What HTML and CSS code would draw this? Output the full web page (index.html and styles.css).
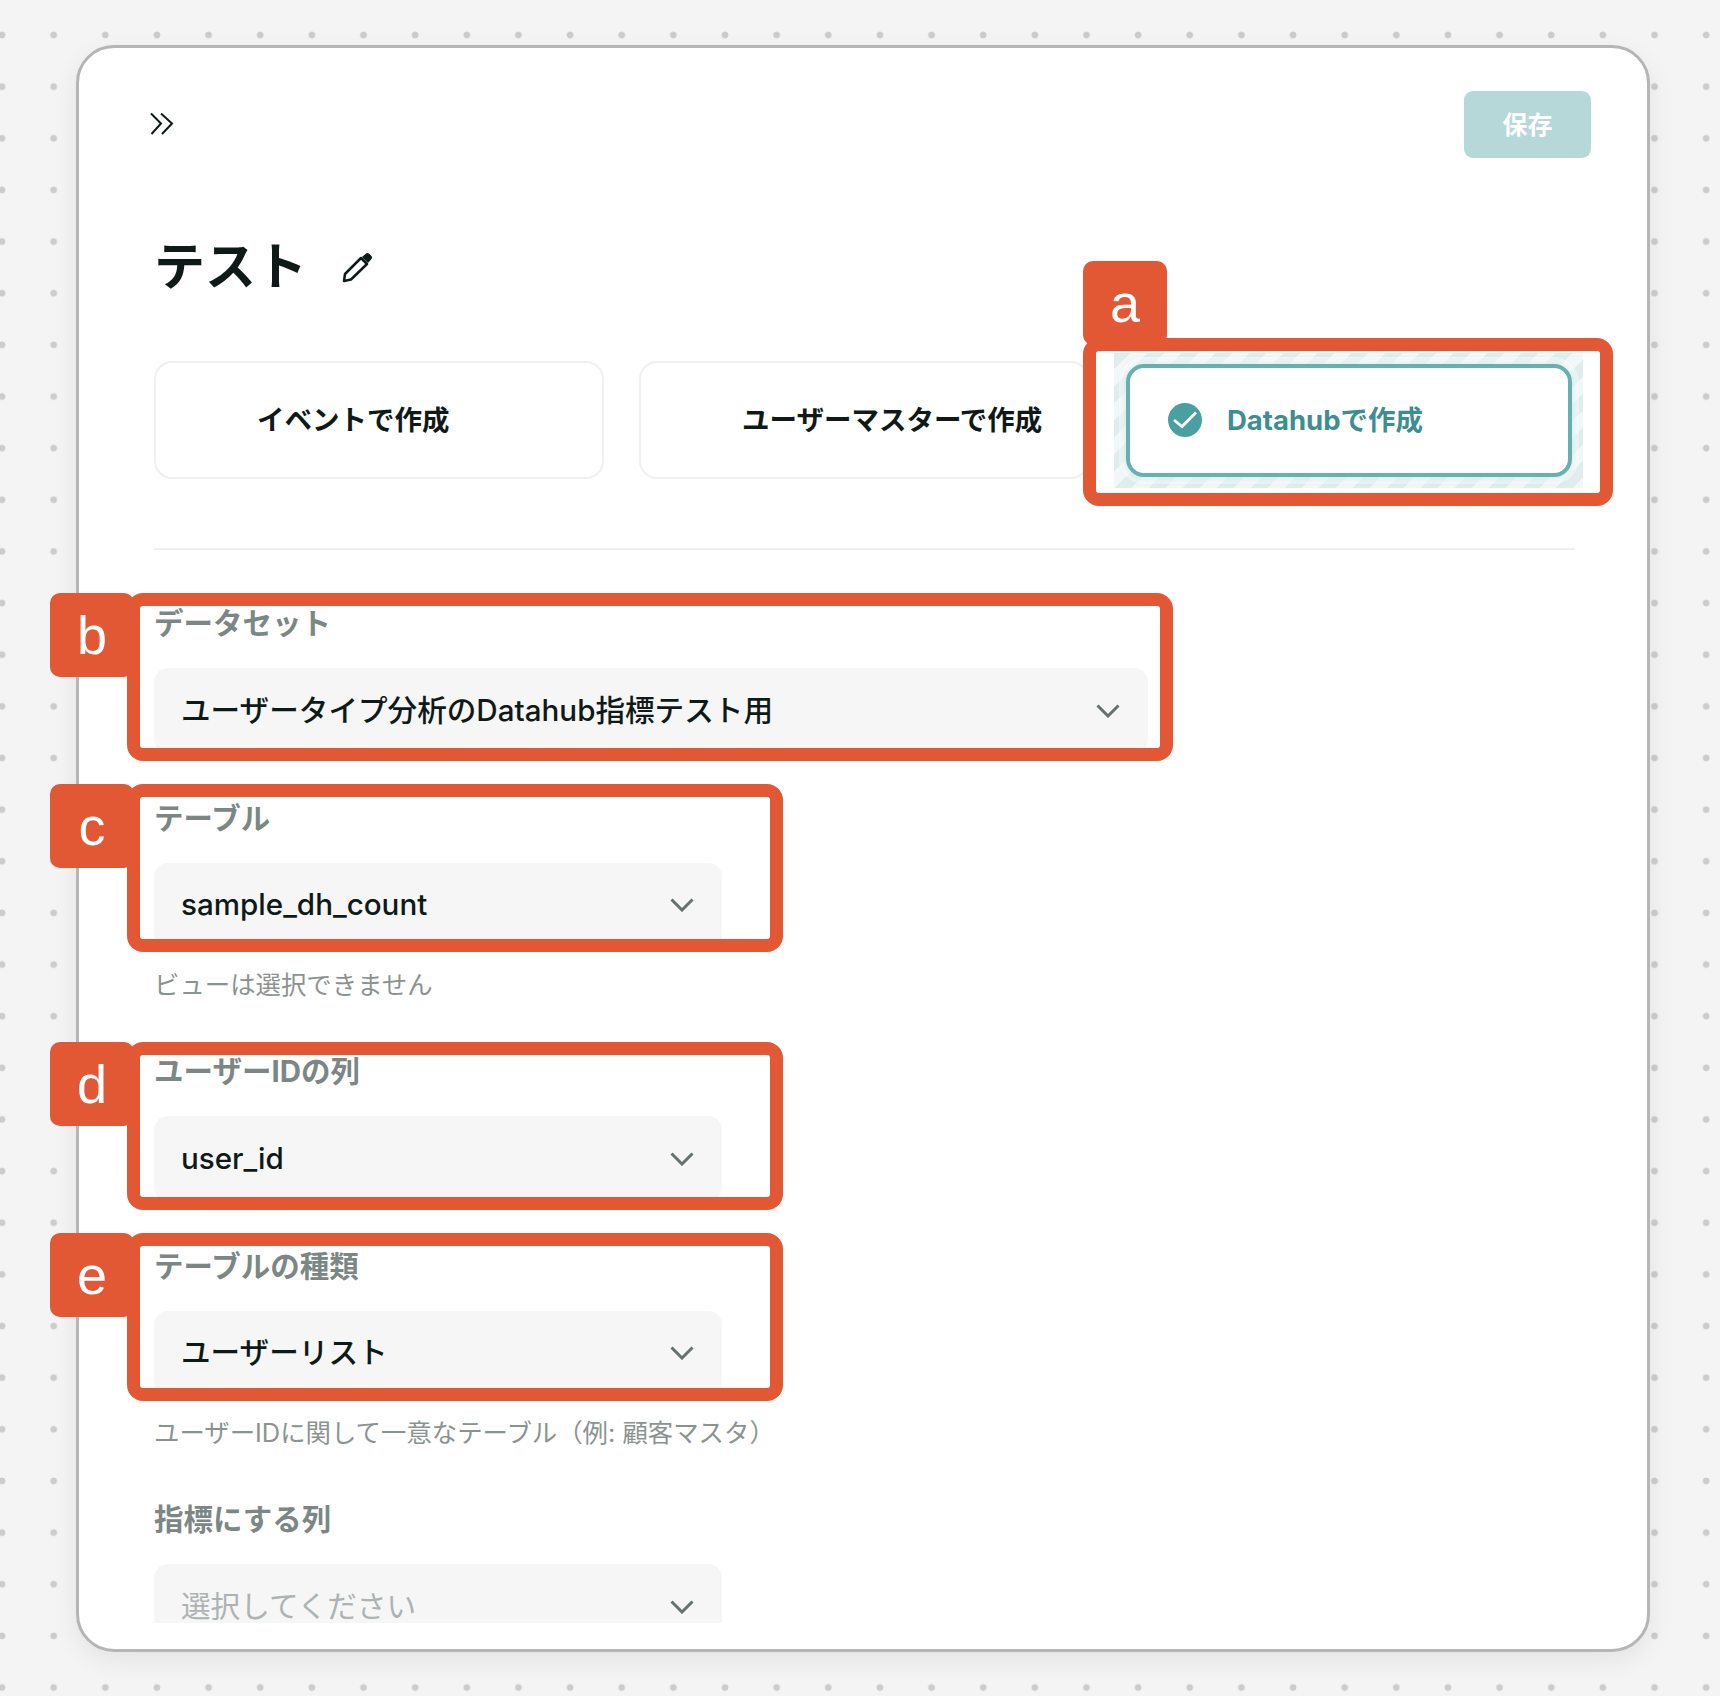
FILE: index.html
```html
<!DOCTYPE html>
<html lang="ja">
<head>
  <meta charset="UTF-8" />
  <title>テスト</title>
  <link rel="stylesheet" href="styles.css">
</head>
<body>
  <div class="page">
    <div class="panel">
      <div class="panel-body">
        <div class="topbar">
          <svg class="expand-icon" width="24" height="24" viewBox="0 0 24 24">
            <path d="M1 1.500 L11 11.500 L1.500 22 M11 1.500 L22 11.500 L12 22" fill="none" stroke="#0f1a18" stroke-width="2"/>
          </svg>
          <button class="save-btn">保存</button>
        </div>

        <div class="title-row">
          <h1>テスト</h1>
          <svg width="31" height="31" viewBox="0 0 31 31">
            <path d="M2 29 L3 22 L19 6 L25 12 L9 27.500 Z" fill="none" stroke="#0f1a18" stroke-width="2.500" stroke-linejoin="round"/>
            <path d="M20 5 L24 1.500 Q25.500 0.500 27 1.500 L29.500 4 Q30.500 5.500 29.500 7 L26 11 Z" fill="#0f1a18"/>
          </svg>
        </div>

        <div class="cards">
          <div class="card">イベントで作成</div>
          <div class="card">ユーザーマスターで作成</div>
          <div class="card card-selected">
            <svg width="34" height="34" viewBox="0 0 34 34">
              <circle cx="17" cy="17" r="17" fill="#4a9fa0"/>
              <path d="M6 17 L14 23.500 L28 9.500" fill="none" stroke="#fff" stroke-width="2.800"/>
            </svg>
            <span>Datahubで作成</span>
          </div>
        </div>

        <div class="divider"></div>

        <div class="field">
          <label>データセット</label>
          <div class="select select-wide">
            <span>ユーザータイプ分析のDatahub指標テスト用</span>
            <svg class="chevron" width="24" height="14" viewBox="0 0 24 14"><path d="M1.500 1.500 L12 12 L22.500 1.500"/></svg>
          </div>
        </div>

        <div class="field field-help">
          <label>テーブル</label>
          <div class="select">
            <span>sample_dh_count</span>
            <svg class="chevron" width="24" height="14" viewBox="0 0 24 14"><path d="M1.500 1.500 L12 12 L22.500 1.500"/></svg>
          </div>
          <p class="help">ビューは選択できません</p>
        </div>

        <div class="field">
          <label>ユーザーIDの列</label>
          <div class="select">
            <span>user_id</span>
            <svg class="chevron" width="24" height="14" viewBox="0 0 24 14"><path d="M1.500 1.500 L12 12 L22.500 1.500"/></svg>
          </div>
        </div>

        <div class="field field-help">
          <label>テーブルの種類</label>
          <div class="select">
            <span>ユーザーリスト</span>
            <svg class="chevron" width="24" height="14" viewBox="0 0 24 14"><path d="M1.500 1.500 L12 12 L22.500 1.500"/></svg>
          </div>
          <p class="help">ユーザーIDに関して一意なテーブル（例: 顧客マスタ）</p>
        </div>

        <div class="field">
          <label>指標にする列</label>
          <div class="select placeholder">
            <span>選択してください</span>
            <svg class="chevron" width="24" height="14" viewBox="0 0 24 14"><path d="M1.500 1.500 L12 12 L22.500 1.500"/></svg>
          </div>
        </div>
      </div>
    </div>

    <!-- callouts drawn over the screenshot -->
    <div class="note note-a"><div class="tag tag-top">a</div></div>
    <div class="note note-b"><div class="tag">b</div></div>
    <div class="note note-c"><div class="tag">c</div></div>
    <div class="note note-d"><div class="tag">d</div></div>
    <div class="note note-e"><div class="tag">e</div></div>
  </div>
</body>
</html>
```

FILE: styles.css
```css
* {
  box-sizing: border-box;
}
body {
  margin: 0;
  font-family: Inter, "Noto Sans CJK JP", sans-serif;
  line-height: 1.2;
  color: #0f1a18;
  background-color: #f4f4f4;
  background-image: radial-gradient(circle, #cccccc 3px, transparent 3.8px);
  background-size: 51.65px 51.65px;
  background-position: -23.8px 9.2px;
}
.page {
  position: relative;
  width: 1720px;
  height: 1696px;
  padding: 45px 0 0 76px;
  overflow: hidden;
}
.panel {
  width: 1574px;
  height: 1607px;
  background-color: #ffffff;
  border: 3px solid #b5b5b5;
  border-radius: 38px;
  box-shadow: 0 8px 26px rgba(0, 0, 0, 0.07);
}
.panel-body {
  position: relative;
  z-index: 0;
  height: 1575px;
  padding: 43px 72px 0 75px;
  overflow: hidden;
}
.topbar {
  display: flex;
  justify-content: space-between;
  align-items: center;
  margin: 0 -16px 0 -4px;
}
.expand-icon {
  margin-top: -1px;
}
.save-btn {
  width: 127px;
  height: 67px;
  padding: 0 0 4px;
  border: none;
  border-radius: 9px;
  background-color: #b7d8d9;
  color: #ffffff;
  font-family: inherit;
  font-size: 25px;
  font-weight: 700;
}
.title-row {
  display: flex;
  align-items: center;
  gap: 35px;
  margin-top: 79px;
}
h1 {
  margin: 0;
  font-size: 51px;
  line-height: 60px;
  font-weight: 700;
}
.cards {
  display: flex;
  align-items: center;
  gap: 35px;
  height: 116px;
  margin-top: 65px;
}
.card {
  display: flex;
  align-items: center;
  flex-shrink: 0;
  width: 450px;
  height: 118px;
  padding-left: 101px;
  border: 2px solid #f0f0f0;
  border-radius: 18px;
  background-color: #ffffff;
  font-size: 27.500px;
  font-weight: 700;
}
.card-selected {
  position: relative;
  width: 446px;
  height: 113px;
  margin-left: 2px;
  padding-left: 38px;
  gap: 25px;
  border: 4px solid #66b0b2;
  color: #3d8e90;
  box-shadow: 0 0 0 7px rgba(255, 255, 255, 0.45), 0 1px 8px rgba(70, 150, 150, 0.35);
}
.card-selected::before {
  content: "";
  position: absolute;
  inset: -15px -15px -15px -16px;
  z-index: -1;
  background: repeating-linear-gradient(135deg, #dfeded 0 12px, #f2f7f7 12px 24px);
}
.divider {
  height: 2px;
  margin-top: 70px;
  background-color: #f0f0f0;
}
.field {
  margin-bottom: 46.500px;
}
.field-help {
  margin-bottom: 50.500px;
}
.divider + .field {
  margin-top: 55px;
}
label {
  display: block;
  font-size: 29.500px;
  line-height: 36px;
  font-weight: 700;
  color: #7c8785;
}
.select {
  display: flex;
  justify-content: space-between;
  align-items: center;
  width: 568px;
  height: 85px;
  margin-top: 27px;
  padding: 0 28px 0 27px;
  border-radius: 14px;
  background-color: #f6f6f6;
  font-size: 29.600px;
  font-weight: 500;
}
.select-wide {
  width: 994px;
}
.placeholder {
  color: #adb3b2;
  font-weight: 400;
}
.chevron path {
  fill: none;
  stroke: #66726f;
  stroke-width: 3;
}
.help {
  margin: 19px 0 0;
  font-size: 25.400px;
  line-height: 36px;
  color: #8b9391;
}

/* callouts */
.note {
  position: absolute;
  left: 127px;
  width: 656px;
  height: 168px;
  border: 13px solid #e25734;
  border-radius: 16px;
}
.note-a {
  left: 1083px;
  top: 338px;
  width: 530px;
}
.note-b {
  top: 593px;
  width: 1046px;
}
.note-c {
  top: 784px;
}
.note-d {
  top: 1042px;
}
.note-e {
  top: 1233px;
}
.tag {
  position: absolute;
  left: -90px;
  top: -13px;
  width: 84px;
  height: 84px;
  border-radius: 10px;
  background-color: #e25734;
  color: #ffffff;
  font-family: "Liberation Sans", Arial, sans-serif;
  font-size: 54px;
  line-height: 84px;
  text-align: center;
}
.tag-top {
  left: -13px;
  top: -90px;
}
```
